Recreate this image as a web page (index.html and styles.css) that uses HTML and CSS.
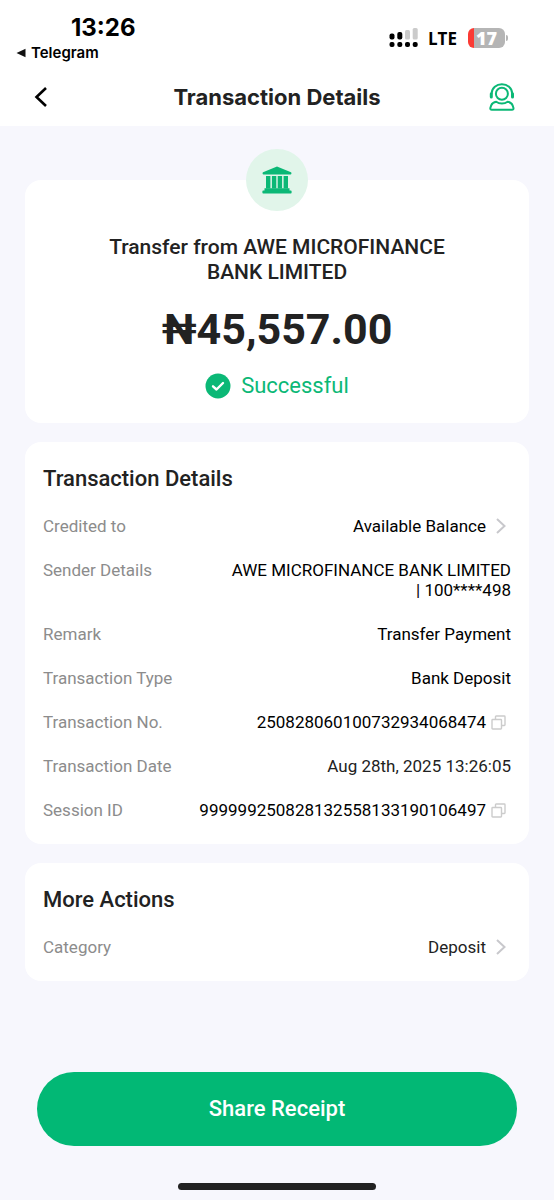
FILE: index.html
```html
<!DOCTYPE html>
<html lang="en">
<head>
    <meta charset="UTF-8">
    <meta name="viewport" content="width=device-width, initial-scale=1.0">
    <title>Transaction Details</title>
    <link rel="stylesheet" href="styles.css">
</head>
<body>
    <header class="header">
        <div class="status-bar">
            <div class="status-left">
                <div class="time">13:26</div>
                <a href="#" class="back-app">
                    <svg width="10" height="10" viewBox="0 0 10 10"><path d="M0.5 5 9.5 0.8v8.4z" fill="#111"/></svg>
                    Telegram
                </a>
            </div>
            <div class="status-right">
                <svg width="30" height="20" viewBox="0 0 30 20">
                    <g fill="#000">
                        <rect x="0.5" y="5.5" width="5" height="6" rx="2"/>
                        <rect x="8.3" y="4" width="5" height="7.5" rx="2"/>
                        <rect x="0.5" y="14" width="5" height="5" rx="2"/>
                        <rect x="8.3" y="14" width="5" height="5" rx="2"/>
                        <rect x="16" y="14" width="5" height="5" rx="2"/>
                        <rect x="23.7" y="14" width="5" height="5" rx="2"/>
                    </g>
                    <g fill="#cbcbcb">
                        <rect x="16" y="2" width="5" height="9.5" rx="1.5"/>
                        <rect x="23.7" y="0" width="5" height="11.5" rx="1.5"/>
                    </g>
                </svg>
                <span class="network">LTE</span>
                <div class="battery"><span class="battery-level">17</span></div>
            </div>
        </div>
        <nav class="nav">
            <button type="button" class="icon-btn" aria-label="Back">
                <svg width="14" height="20" viewBox="0 0 14 20" fill="none" stroke="#000" stroke-width="2.6"><path d="M12 1 2.5 10 12 19"/></svg>
            </button>
            <h1>Transaction Details</h1>
            <button type="button" class="icon-btn nav-end" aria-label="Support">
                <svg width="26" height="28" viewBox="0 0 26 28" fill="none" stroke="#0bb876" stroke-width="2" stroke-linecap="round" stroke-linejoin="round">
                    <circle cx="12.9" cy="10.8" r="6"/>
                    <path d="M2.6 10.5C2.9 4.8 7.4 1.3 12.9 1.3s10 3.5 10.3 9.2"/>
                    <path d="M2.3 10.8v3.2M23.5 10.8v3.2" stroke-width="3"/>
                    <path d="M7.2 18.8c-2.7.4-4.200 1.600-5 3.600l-.8 2.400c-.3 1.200.2 2 1.400 2h20.200c1.200 0 1.700-.8 1.400-2l-.8-2.400c-.8-2-2.300-3.200-5-3.600-3.200 2.400-8.200 2.400-11.400 0z"/>
                </svg>
            </button>
        </nav>
    </header>

    <main class="content">
        <section class="card summary">
            <div class="bank-icon">
                <svg width="30" height="28" viewBox="0 0 30 28" fill="#0bb876">
                    <path d="M15 .5 29 6.2c.7.3.6 2.300-.5 2.300h-27C.4 8.500.3 6.500 1 6.200z"/>
                    <path d="M4 10h4.400v12.500H4zM9.900 10h4.400v12.500H9.900zM15.700 10h4.400v12.500h-4.400zM21.600 10H26v12.500h-4.400z"/>
                    <path d="M2.500 22.300h25v2.200h1.300q.8 0 .8.800v1.400q0 .8-.8.800H1.200q-.8 0-.8-.8v-1.400q0-.8.8-.8h1.300z"/>
                </svg>
            </div>
            <h2 class="summary-title">Transfer from AWE MICROFINANCE BANK LIMITED</h2>
            <p class="amount">₦45,557.00</p>
            <p class="status">
                <svg width="26" height="26" viewBox="0 0 26 26"><circle cx="13" cy="13" r="12.5" fill="#0bb876"/><path d="M8 13.3 11.5 16.5 18 10" fill="none" stroke="#fff" stroke-width="2.4" stroke-linecap="round" stroke-linejoin="round"/></svg>
                Successful
            </p>
        </section>

        <section class="card">
            <h2>Transaction Details</h2>
            <dl class="details">
                <div class="row">
                    <dt>Credited to</dt>
                    <dd><a href="#" class="row-link">Available Balance
                        <svg class="chevron" width="10" height="16" viewBox="0 0 10 16"><path d="M1 1 8.5 8 1 15"/></svg></a></dd>
                </div>
                <div class="row">
                    <dt>Sender Details</dt>
                    <dd>AWE MICROFINANCE BANK LIMITED | 100****498</dd>
                </div>
                <div class="row">
                    <dt>Remark</dt>
                    <dd>Transfer Payment</dd>
                </div>
                <div class="row">
                    <dt>Transaction Type</dt>
                    <dd>Bank Deposit</dd>
                </div>
                <div class="row">
                    <dt>Transaction No.</dt>
                    <dd class="copyable">250828060100732934068474
                        <button type="button" class="icon-btn" aria-label="Copy transaction number">
                            <svg class="copy" width="15" height="15" viewBox="0 0 15 15"><path d="M4.5 4V1.7q0-.7.7-.7h8.1q.7 0 .7.7v8.1q0 .7-.7.7H11"/><rect x="1" y="4.5" width="9.5" height="9.5" rx=".7"/></svg>
                        </button>
                    </dd>
                </div>
                <div class="row">
                    <dt>Transaction Date</dt>
                    <dd class="soft">Aug 28th, 2025 13:26:05</dd>
                </div>
                <div class="row">
                    <dt>Session ID</dt>
                    <dd class="copyable">999999250828132558133190106497
                        <button type="button" class="icon-btn" aria-label="Copy session ID">
                            <svg class="copy" width="15" height="15" viewBox="0 0 15 15"><path d="M4.5 4V1.7q0-.7.7-.7h8.1q.7 0 .7.7v8.1q0 .7-.7.7H11"/><rect x="1" y="4.5" width="9.5" height="9.5" rx=".7"/></svg>
                        </button>
                    </dd>
                </div>
            </dl>
        </section>

        <section class="card">
            <h2>More Actions</h2>
            <dl class="details">
                <div class="row">
                    <dt>Category</dt>
                    <dd class="soft"><a href="#" class="row-link">Deposit
                        <svg class="chevron" width="10" height="16" viewBox="0 0 10 16"><path d="M1 1 8.5 8 1 15"/></svg></a></dd>
                </div>
            </dl>
        </section>
    </main>

    <footer class="footer">
        <button type="button" class="share-btn">Share Receipt</button>
        <div class="home-indicator"></div>
    </footer>
</body>
</html>
```
FILE: styles.css
```css
* {
    margin: 0;
    padding: 0;
    box-sizing: border-box;
}

body {
    font-family: Roboto, "Liberation Sans", sans-serif;
    background-color: #f7f7fd;
    color: #222;
    min-height: 100vh;
    display: flex;
    flex-direction: column;
}

a {
    color: inherit;
    text-decoration: none;
}

button {
    border: none;
    background: none;
    font-family: inherit;
    cursor: pointer;
}

svg {
    display: block;
    flex-shrink: 0;
}

.icon-btn {
    display: flex;
}

/* Header */
.header {
    background-color: #fff;
    padding: 14px 0;
    font-family: Inter, "Liberation Sans", sans-serif;
}

.status-bar {
    display: flex;
    justify-content: space-between;
    padding: 0 49px 0 16px;
    color: #000;
}

.time {
    padding-left: 55px;
    font-size: 24px;
    line-height: 28px;
    font-weight: 700;
}

.back-app {
    display: flex;
    align-items: center;
    gap: 5px;
    font-size: 15px;
    line-height: 22px;
    font-weight: 600;
}

.status-right {
    display: flex;
    align-items: center;
    gap: 9px;
    height: 48px;
}

.network {
    font-family: "Open Sans", sans-serif;
    font-size: 17px;
    font-weight: 700;
}

.battery {
    position: relative;
    width: 37px;
    height: 20px;
    margin-left: 2px;
    border-radius: 6px;
    background: linear-gradient(to right, #fb3b34 6px, #b5b5b5 6px);
    text-align: center;
}

.battery::after {
    content: "";
    position: absolute;
    right: -3px;
    top: 7px;
    width: 2px;
    height: 6px;
    border-radius: 0 2px 2px 0;
    background-color: #b5b5b5;
}

.battery-level {
    display: block;
    font-family: "Open Sans", sans-serif;
    font-size: 18px;
    line-height: 20px;
    font-weight: 800;
    color: #fff;
}

.nav {
    display: grid;
    grid-template-columns: 1fr auto 1fr;
    align-items: center;
    padding: 18px 34px 0;
}

.nav h1 {
    font-size: 22px;
    line-height: 30px;
    font-weight: 700;
}

.nav-end {
    justify-self: end;
    width: 31px;
}

/* Cards */
.content {
    display: flex;
    flex-direction: column;
    gap: 19px;
    padding: 54px 25px 24px;
}

.card {
    background-color: #fff;
    border-radius: 16px;
    padding: 24px 18px;
}

.card h2 {
    font-size: 22px;
    line-height: 26px;
    font-weight: 500;
}

.summary {
    display: flex;
    flex-direction: column;
    align-items: center;
    padding-top: 0;
    text-align: center;
}

.bank-icon {
    display: flex;
    align-items: center;
    justify-content: center;
    width: 62px;
    height: 62px;
    margin-top: -31px;
    margin-bottom: 24px;
    border-radius: 50%;
    background-color: #e1f5ea;
}

.card .summary-title {
    max-width: 360px;
    font-size: 21px;
    line-height: 25px;
}

.amount {
    margin: 18px 0;
    font-size: 43px;
    line-height: 52px;
    font-weight: 700;
}

.status {
    display: flex;
    align-items: center;
    gap: 10px;
    font-size: 22px;
    line-height: 26px;
    color: #0bb876;
}

.details {
    display: flex;
    flex-direction: column;
    gap: 24px;
    margin-top: 24px;
    font-size: 17px;
    line-height: 20px;
}

.row {
    display: flex;
    justify-content: space-between;
    gap: 24px;
}

.row dt {
    flex-shrink: 0;
    color: #8c8c8c;
}

.row dd {
    max-width: 280px;
    color: #000;
    text-align: right;
}

.row .copyable {
    display: flex;
    align-items: center;
    gap: 5px;
    max-width: none;
    padding-right: 5px;
}

.row .soft {
    color: #222;
}

.row-link {
    display: flex;
    align-items: center;
    gap: 10px;
    padding-right: 5px;
}

.chevron {
    fill: none;
    stroke: #c8c8cc;
    stroke-width: 2;
}

.copy {
    fill: none;
    stroke: #ccc;
    stroke-width: 1.4;
}

/* Footer */
.footer {
    margin-top: auto;
    padding: 0 37px 10px;
}

.share-btn {
    width: 100%;
    padding: 24px;
    border-radius: 37px;
    background-color: #02b875;
    color: #fff;
    font-size: 22px;
    line-height: 26px;
    font-weight: 500;
}

.home-indicator {
    width: 198px;
    height: 7px;
    margin: 37px auto 0;
    border-radius: 4px;
    background-color: #222;
}
```
